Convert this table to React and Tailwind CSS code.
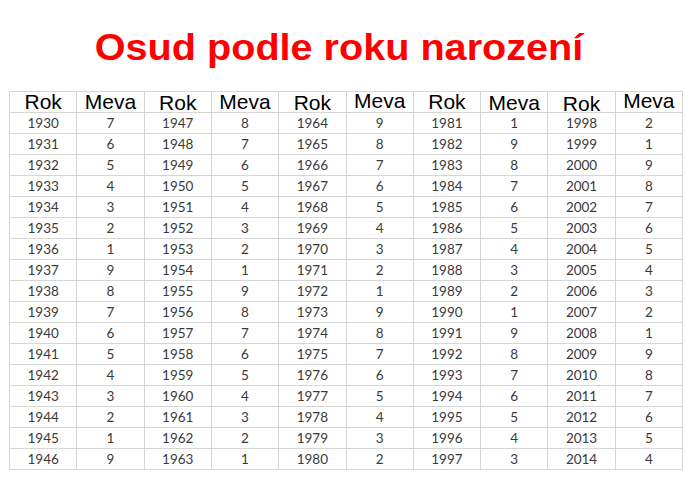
import React from "react"

const headerNudge = ["", "", "translate-y-[1px]", "", "translate-y-[1px]", "-translate-y-[1px]", "", "translate-y-[1px]", "translate-y-[2px]", "-translate-y-[1px]"]

const meva = (year) => {
  const m = (((7 - (year - 1930)) % 9) + 9) % 9
  return m === 0 ? 9 : m
}

export default function App() {
  const rows = Array.from({ length: 17 }, (_, i) =>
    Array.from({ length: 5 }, (_, k) => 1930 + k * 17 + i),
  )

  return (
    <div className="h-[479px] w-[691px] bg-white">
      <div className="flex justify-center pt-[28px] pr-[12px]">
        <h1 className="origin-center scale-x-[1.1] font-['Liberation_Sans',Arial,sans-serif] text-[36px] font-bold leading-[40px] text-[#ff0000]">
          Osud podle roku narození
        </h1>
      </div>

      <div className="ml-[9px] mt-[23px] grid w-[674px] grid-cols-10 border-l border-t border-[#d6d6d6]">
        {headerNudge.map((nudge, i) => (
          <div
            key={i}
            className="flex h-[21px] items-start justify-center border-b border-r border-[#d6d6d6] pt-[1px]"
          >
            <span className={`font-['Liberation_Sans',Arial,sans-serif] text-[21px] leading-[18px] text-black ${nudge}`}>
              {i % 2 === 0 ? "Rok" : "Meva"}
            </span>
          </div>
        ))}

        {rows.map((years) =>
          years.map((year) => (
            <React.Fragment key={year}>
              <div className="flex h-[21px] items-center justify-center border-b border-r border-[#d6d6d6] font-['Lato',sans-serif] text-[13.5px] text-[#3a3a3a]">
                {year}
              </div>
              <div className="flex h-[21px] items-center justify-center border-b border-r border-[#d6d6d6] font-['Lato',sans-serif] text-[13.5px] text-[#3a3a3a]">
                {meva(year)}
              </div>
            </React.Fragment>
          )),
        )}
      </div>
    </div>
  )
}
